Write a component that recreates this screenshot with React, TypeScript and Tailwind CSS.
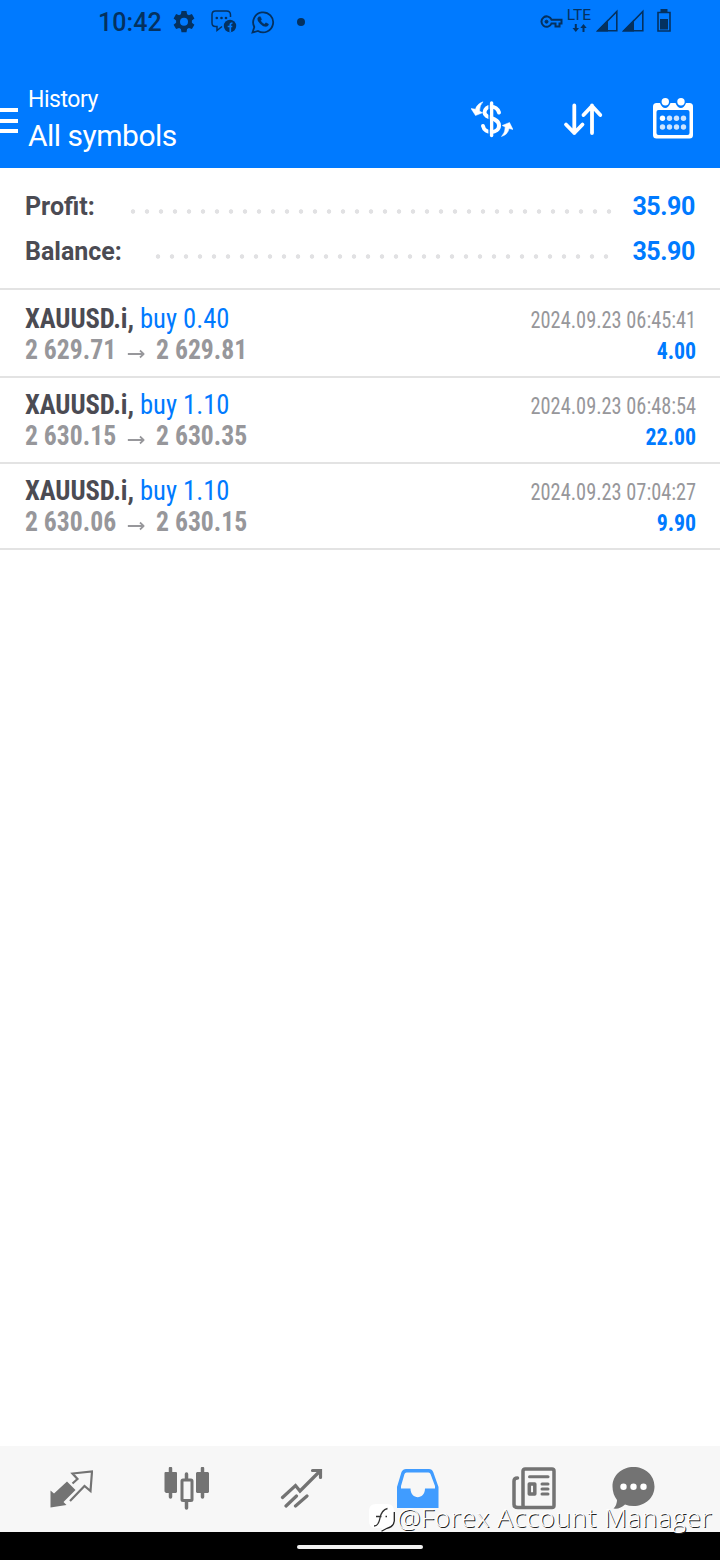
import type { ReactNode } from "react";

type Deal = {
  id: number;
  symbol: string;
  side: string;
  open: string;
  close: string;
  time: string;
  profit: string;
};

const deals: Deal[] = [
  { id: 1, symbol: "XAUUSD.i", side: "buy 0.40", open: "2 629.71", close: "2 629.81", time: "2024.09.23 06:45:41", profit: "4.00" },
  { id: 2, symbol: "XAUUSD.i", side: "buy 1.10", open: "2 630.15", close: "2 630.35", time: "2024.09.23 06:48:54", profit: "22.00" },
  { id: 3, symbol: "XAUUSD.i", side: "buy 1.10", open: "2 630.06", close: "2 630.15", time: "2024.09.23 07:04:27", profit: "9.90" },
];

function StatusBar() {
  return (
    <div className="flex h-11 items-center text-[#04315f]">
      <span className="ml-[98px] w-[66px] text-[25px] font-[480] leading-none tracking-[0.1px]">10:42</span>
      {/* notification icons */}
      <svg className="ml-2 h-6 w-6 shrink-0" viewBox="0 0 24 24" fill="currentColor">
        <path fillRule="evenodd" d="M9.5 1h5l.6 3.2 1.8 1 3-1.1 2.5 4.3-2.5 2.1v2.2l2.5 2.1-2.5 4.3-3-1.1-1.8 1-.6 3.2h-5l-.6-3.2-1.8-1-3 1.1-2.5-4.3 2.5-2.1v-2.2L1.6 8.4l2.5-4.3 3 1.1 1.8-1zM12 7.8a4 4 0 1 0 0 8 4 4 0 0 0 0-8z" />
      </svg>
      <svg className="ml-[14px] h-[26px] w-[28px] shrink-0" viewBox="0 0 28 26" fill="none">
        <path d="M12 17.5l-5 4V17.5H5.5Q2 17.5 2 14V5.5Q2 2 5.5 2H16.5Q20.5 2 20.5 6V8" stroke="currentColor" strokeWidth="1.5" />
        <circle cx="6.8" cy="9" r="1.3" fill="currentColor" />
        <circle cx="11.5" cy="9" r="1.3" fill="currentColor" />
        <circle cx="16" cy="9" r="1.3" fill="currentColor" />
        <circle cx="20" cy="17" r="6.2" fill="currentColor" />
        <path d="M20.3 23V16q0-2 2.2-2M17.7 17.5h4.6" stroke="#007aff" strokeWidth="1.7" />
      </svg>
      <svg className="ml-[13px] h-6 w-6 shrink-0" viewBox="0 0 24 24" fill="none" stroke="currentColor">
        <path d="M1.5 22.5L3.3 17A10 10 0 1 1 7 20.9z" strokeWidth="1.8" />
        <path d="M8 6.8l1.4-.1 1.2 2.7-1 1.4q1.3 2.5 3.9 3.5l1.3-1.5 2.7 1.3q0 2.3-2.8 2.5-2.7 0-5.7-3.2-2.7-3-2.4-4.7 .3-1.4 1.4-1.9z" fill="currentColor" strokeWidth=".4" />
      </svg>
      <span className="ml-[22px] h-2 w-2 rounded-full bg-current" />

      {/* network and battery */}
      <svg className="ml-[235px] h-[14px] w-[23px] shrink-0" viewBox="0 0 23 14" fill="none" stroke="currentColor" strokeWidth="2">
        <path d="M11.5 4.7H21.5V8.5H19.5V11.5H15.5V8.5H11.5A5.2 5.2 0 1 1 11.5 4.7z" />
        <circle cx="6.5" cy="6.7" r="1.5" fill="currentColor" strokeWidth="1" />
      </svg>
      <div className="-mt-1 ml-[4px] flex w-6 flex-col items-center">
        <span className="text-[15.5px] leading-[14px]">LTE</span>
        <svg className="mt-[2px] h-2 w-[15px]" viewBox="0 0 14 8" fill="currentColor">
          <path d="M2.3 0h2v4h2.2L3.3 8 0 4h2.3zM10 8h2V4h2.2L11 0 7.8 4H10z" />
        </svg>
      </div>
      <div className="ml-[5px] flex gap-[4px]">
        {[0, 1].map((n) => (
          <svg key={n} className="-mt-[3px] h-[23px] w-[22px] shrink-0" viewBox="0 0 22 23">
            <path d="M2 21.8L20.8 2.5V21.8z" fill="none" stroke="currentColor" strokeWidth="1.6" />
            <path d="M0 22.5L12 10.5V22.5z" fill="currentColor" />
          </svg>
        ))}
      </div>
      <svg className="-mt-[3px] ml-[13px] h-[23px] w-[14px] shrink-0" viewBox="0 0 14 23">
        <path d="M1 3.5H13V22H1z" fill="none" stroke="currentColor" strokeWidth="1.6" />
        <path d="M3 10H11V20.5H3zM3.5 0H10.5V3H3.5z" fill="currentColor" />
      </svg>
    </div>
  );
}

function Header() {
  return (
    <header className="h-[168px] bg-[#007aff]">
      <StatusBar />
      <div className="flex h-[124px] pt-[44px]">
        <div className="mt-5 flex w-[18px] flex-col gap-[6.5px]">
          <span className="h-1 bg-white" />
          <span className="h-1 bg-white" />
          <span className="h-1 bg-white" />
        </div>
        <div className="ml-[10px] w-[443px] text-white">
          <p className="text-[23px] leading-6 tracking-[-0.45px]">History</p>
          <h1 className="mt-[6px] text-[30px] font-normal leading-[36px] tracking-[-0.5px]">All symbols</h1>
        </div>
        <svg className="mt-[13px] h-[38px] w-[42px] shrink-0" viewBox="0 0 42 38" fill="none" stroke="white">
          <path d="M20.6 2V34.5" strokeWidth="3.4" strokeLinecap="round" />
          <path d="M28 11.5C26 3.5 13.5 4 13.5 11.5C13.5 18 28 16 28 24.5C28 33 13.5 33 12 25" strokeWidth="4" strokeLinecap="round" />
          <path d="M18.1 4V33" stroke="#007aff" strokeWidth="1.4" />
          <path d="M12 .8Q5.8 3 4.5 8.2L0 7.5 4.5 14.5 11.5 11.8 8.5 10Q8.8 4 12 .8zM30.5 35.5Q37 33.5 38 27.5L42 28.5 38.5 21.5 31.2 24.5 34.2 26Q34.2 31.5 30.5 35.5z" fill="white" stroke="white" strokeWidth=".5" />
        </svg>
        <svg className="ml-[50px] mt-[15px] h-[34px] w-10 shrink-0" viewBox="0 0 40 34" fill="none" stroke="white" strokeWidth="3.8" strokeLinecap="round" strokeLinejoin="round">
          <path d="M11.3 2.5V30M3 21.5L11.3 30 19.5 21.500M29 30V2.500M20.500 12L29 3 37.300 12" />
        </svg>
        <svg className="ml-[50px] mt-[10px] h-[41px] w-10 shrink-0" viewBox="0 0 40 41">
          <rect y="5" width="40" height="35.5" rx="3.5" fill="white" />
          <rect x="3.5" y="12" width="33" height="25" rx="2" fill="#007aff" />
          <path d="M7 5Q9 10 12.2 10T17.5 5zM22.5 5Q24.5 10 27.8 10T33 5z" fill="#007aff" />
          <circle cx="12.3" cy="3.7" r="3.7" fill="white" />
          <circle cx="28" cy="3.7" r="3.7" fill="white" />
          {[9.5, 16.5, 23.5, 30.5].map((x, i) => (
            <g key={x} fill="white">
              <circle cx={x} cy="20.3" r="2.7" opacity={i === 0 ? 1 : 0.8} />
              <circle cx={x} cy="29" r="2.7" opacity="0.8" />
            </g>
          ))}
        </svg>
      </div>
    </header>
  );
}

function SummaryRow({ label, value, children }: { label: string; value: string; children: ReactNode }) {
  return (
    <div className="flex h-[45px] items-center px-[25px] text-[25px] font-bold">
      <span className="text-[#4b4b53]">{label}</span>
      {children}
      <span className="tracking-[-0.4px] text-[#007aff]">{value}</span>
    </div>
  );
}

function DealRow({ deal }: { deal: Deal }) {
  return (
    <li className="flex h-[86px] justify-between border-b-2 border-[#e3e3e3] pl-[25px] pr-6 pt-[11px] font-stretch-[75%]">
      <div className="origin-left scale-x-95">
        <p className="text-[28px] leading-8 whitespace-nowrap">
          <span className="font-bold tracking-[-0.1px] text-[#4b4b53]">{deal.symbol},</span>{" "}
          <span className="text-[#007aff]">{deal.side}</span>
        </p>
        <p className="flex items-center text-[27px] font-bold leading-[30px] text-[#97979b]">
          <span>{deal.open}</span>
          <svg className="ml-[12px] mr-[12px] mt-[8px] h-[10px] w-[18px]" viewBox="0 0 18 10" fill="none" stroke="currentColor" strokeWidth="1.8">
            <path d="M0 5H17M13 1.5L17 5 13 8.5" />
          </svg>
          <span>{deal.close}</span>
        </p>
      </div>
      <div className="text-right">
        <p className="mt-[3px] origin-right scale-x-[0.885] text-[23px] leading-[30px] text-[#97979b]">{deal.time}</p>
        <p className="mt-[2px] origin-right scale-x-95 text-[23px] font-bold leading-[28px] text-[#007aff]">{deal.profit}</p>
      </div>
    </li>
  );
}

function BottomNav() {
  return (
    <nav className="flex h-[86px] items-start bg-[#f7f7f7] pl-[50px] pt-[21px] text-[#737373]">
      {/* quotes */}
      <svg className="mt-[3px] h-[38px] w-[43px]" viewBox="0 0 43 38" fill="none">
        <path d="M17 11.5L25.5 20 13.5 32 16.5 35 .5 37.5V20.5L4 23.5z" fill="currentColor" />
        <path d="M22.5 13.5L27.5 9 22.5 3.5 42 1.5 40.5 21 34.5 16 20 31" stroke="currentColor" strokeWidth="2.2" />
      </svg>
      {/* charts */}
      <svg className="ml-[71px] h-[43px] w-[45px]" viewBox="0 0 45 43" fill="none" stroke="currentColor">
        <path d="M6.5 1.5V30M38.5 1.5V30M22.5 7V12M22.5 34V41" strokeWidth="3.5" strokeLinecap="round" />
        <path d="M.5 6Q.5 5 1.5 5H12Q13 5 13 6V25L12 26H2L.5 24.5zM32 6L33 5H44L45 6V25L44 26H33L32 25z" fill="currentColor" stroke="none" />
        <rect x="18" y="13" width="10" height="20.5" rx="1" strokeWidth="3" />
      </svg>
      {/* trade */}
      <svg className="ml-[71px] h-[41px] w-[43px]" viewBox="0 0 43 41" fill="none" stroke="currentColor" strokeWidth="3.2" strokeLinecap="round">
        <path d="M2.5 30.5L15.5 18.5 20 24 40 4M32.5 3.5H40.5V10.5M6 39L16.5 29M15.5 39L27 29" />
      </svg>
      {/* history, the selected tab */}
      <svg className="ml-[73px] mt-[2px] h-10 w-[43px] text-[#409cff]" viewBox="0.5 0 42 40" fill="currentColor">
        <path fillRule="evenodd" d="M10 0H33Q36 0 37.2 3L42.5 18V39H1V18L5.5 3Q7 0 10 0zM10.5 3.5Q9 3.5 8.5 5L5 17V19.5H14.500C14.500 31 29 31 29 19.500H39V17L34.500 5Q34 3.500 32.500 3.500z" />
      </svg>
      {/* news */}
      <svg className="ml-[73px] h-[43px] w-[44px]" viewBox="0 0 44 43" fill="none" stroke="currentColor" strokeWidth="3.5" strokeLinecap="round">
        <rect x="11" y="2" width="31" height="38.5" rx="2" />
        <path d="M5.5 11Q2 11 2 14V37.5Q2 40.5 6 40.5H12" />
        <path d="M17.5 9.7H36" strokeWidth="3" />
        <rect x="17.3" y="17" width="5.5" height="10" strokeLinejoin="round" />
        <path d="M30 17H36M30 22H36M30 27H36" strokeWidth="3" />
      </svg>
      {/* messages */}
      <svg className="ml-[56px] h-[43px] w-[43px]" viewBox="0 0 43 43">
        <path d="M21.5 0C33 0 42.5 8 42.5 19.5S33 39 21.5 39Q17 39 13 37.5 8 42.5 1.5 41.5 5 38 5 33 .5 27 .5 19.5C.5 8 10 0 21.5 0z" fill="currentColor" />
        <circle cx="11.5" cy="19.7" r="3.2" fill="white" />
        <circle cx="21.5" cy="19.7" r="3.2" fill="white" />
        <circle cx="31.5" cy="19.7" r="3.2" fill="white" />
      </svg>
    </nav>
  );
}

function Watermark() {
  return (
    <div className="absolute left-[369px] top-[1501px] flex items-center text-white">
      <svg className="mt-px h-[30px] w-[27px]" viewBox="0 0 27 30" fill="none">
        <path d="M7 2H18Q25 2 25 9V19Q25 25 18 26L12 29 13 26H7Q0 26 0 19V9Q0 2 7 2z" fill="white" />
        <path d="M5 24Q9.5 24 11 16T18.5 6.5M7 14.5H12.5M16.5 14.5H18" stroke="#333" strokeWidth="1.3" />
        <path d="M25.3 10V19Q24.5 25 18 26.3L12.5 29.3" stroke="#222" strokeWidth="1.3" />
      </svg>
      <span className="ml-px whitespace-nowrap font-['Open_Sans'] text-[26.5px] font-light leading-[30px] tracking-[0.4px] [text-shadow:1px_1px_0.5px_#222]">
        @Forex Account Manager
      </span>
    </div>
  );
}

export default function App() {
  return (
    <div className="relative flex h-[1560px] w-[720px] flex-col overflow-hidden bg-white font-['Roboto',sans-serif]">
      <Header />
      <section className="h-[122px] border-b-2 border-[#e3e3e3] pt-[16.5px]">
        <SummaryRow label="Profit:" value="35.90">
          <span className="ml-auto mr-4 mt-[8px] h-[5px] w-[490px] bg-[radial-gradient(circle,#e1e1e3_1.9px,transparent_2.6px)] bg-[length:14px_5px]" />
        </SummaryRow>
        <SummaryRow label="Balance:" value="35.90">
          <span className="ml-auto mr-[19px] mt-[8px] h-[5px] w-[462px] bg-[radial-gradient(circle,#e1e1e3_1.9px,transparent_2.6px)] bg-[length:14px_5px]" />
        </SummaryRow>
      </section>
      <ul className="flex-1 pt-[2px]">
        {deals.map((deal) => (
          <DealRow key={deal.id} deal={deal} />
        ))}
      </ul>
      <BottomNav />
      <div className="flex h-7 justify-center bg-black pt-[13px]">
        <span className="h-1 w-[126px] rounded-full bg-[#f1f1f1]" />
      </div>
      <Watermark />
    </div>
  );
}
